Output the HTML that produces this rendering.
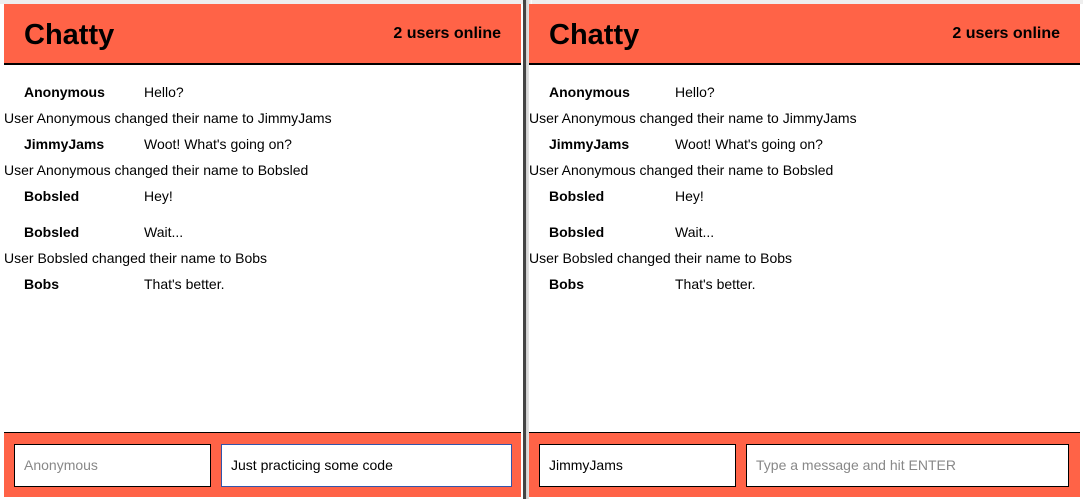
<!DOCTYPE html>
<html><head><style>
*{box-sizing:border-box;margin:0;padding:0}
body{width:1083px;height:499px;background:#fff;font-family:"Liberation Sans",sans-serif;position:relative;overflow:hidden}
.top{position:absolute;left:0;top:0;width:1083px;height:4px;background:#eee}
.pane{position:absolute;top:4px;height:495px;background:#fff}
.hdr{position:absolute;left:0;right:0;top:0;height:61px;background:#ff6347;border-bottom:2px solid #000}
.hdr h1{position:absolute;left:20px;top:15px;font-size:29px;font-weight:bold}
.hdr span{position:absolute;right:20px;top:21px;font-size:16px;font-weight:bold}
.m{position:absolute;font-size:14px;color:#000;white-space:nowrap}
.u{font-weight:bold}
.ft{position:absolute;left:0;right:0;top:428px;height:65px;background:#ff6347;border-top:1px solid #000}
.in{position:absolute;top:11px;height:43px;background:#fff;border:1px solid #000;font-size:14px;padding:12px 9px}
.ph{color:#888}
</style></head><body>
<div class="top"></div>
<div style="position:absolute;left:523px;top:0;width:3px;height:499px;background:#444"></div>
<div style="position:absolute;left:526px;top:0;width:6px;height:499px;background:linear-gradient(90deg,#ccc,#fff)"></div>
<div class="pane" style="left:4px;width:517px">
<div class="hdr"><h1>Chatty</h1><span>2 users online</span></div>
<div class="ft"><div class="in ph" style="left:10px;width:197px">Anonymous</div><div class="in" style="left:217px;width:291px;border-color:#3355aa">Just practicing some code</div></div>
</div>
<div class="pane" style="left:529px;width:551px">
<div class="hdr"><h1>Chatty</h1><span>2 users online</span></div>
<div class="ft"><div class="in" style="left:10px;width:197px">JimmyJams</div><div class="in ph" style="left:217px;width:323px">Type a message and hit ENTER</div></div>
</div>
<div id="msgs"></div>
<script>
var rows=[[84,"Anonymous","Hello?"],[110,null,"User Anonymous changed their name to JimmyJams"],[136,"JimmyJams","Woot! What's going on?"],[162,null,"User Anonymous changed their name to Bobsled"],[188,"Bobsled","Hey!"],[224,"Bobsled","Wait..."],[250,null,"User Bobsled changed their name to Bobs"],[276,"Bobs","That's better."]];
var h="";[[0,0],[525,6]].forEach(function(o){var x=o[0],d=o[1];rows.forEach(function(r){if(r[1]){h+='<div class="m u" style="left:'+(x+24)+'px;top:'+r[0]+'px">'+r[1]+'</div><div class="m" style="left:'+(x+144+d)+'px;top:'+r[0]+'px">'+r[2]+'</div>';}else{h+='<div class="m" style="left:'+(x+4)+'px;top:'+r[0]+'px">'+r[2]+'</div>';}});});
document.getElementById("msgs").innerHTML=h;
</script>
</body></html>
